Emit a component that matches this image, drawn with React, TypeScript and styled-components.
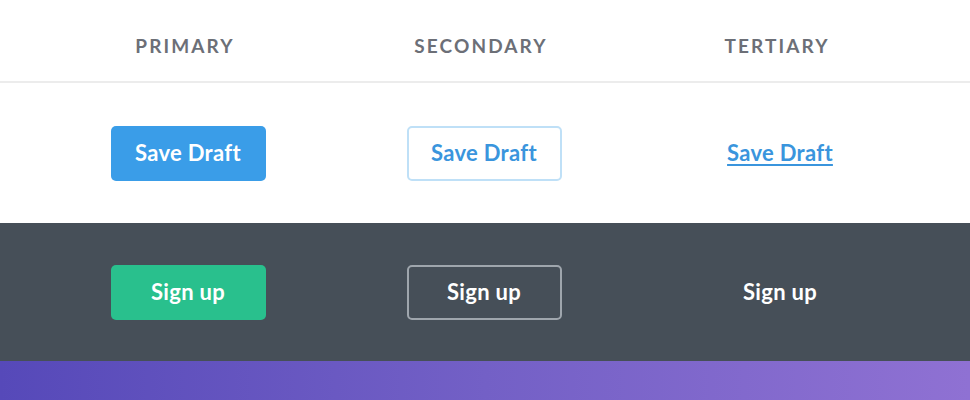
import React from 'react';
import styled, { createGlobalStyle, css } from 'styled-components';

const GlobalStyle = createGlobalStyle`
  html, body {
    margin: 0;
    padding: 0;
    background: #ffffff;
  }
  body {
    font-family: Lato, "Open Sans", Arial, sans-serif;
    -webkit-font-smoothing: antialiased;
  }
`;

const Page = styled.div`
  width: 970px;
  height: 400px;
  overflow: hidden;
  display: flex;
  flex-direction: column;
`;

const Row = styled.div<{ $height: number; $dark?: boolean; $border?: boolean }>`
  display: grid;
  grid-template-columns: repeat(3, 296px);
  padding: 0 42px 0 40px;
  align-items: center;
  justify-items: center;
  height: ${({ $height }) => $height}px;
  flex-shrink: 0;
  background: ${({ $dark }) => ($dark ? '#464f58' : '#ffffff')};
  ${({ $border }) => $border && css`border-bottom: 2px solid #ececec;`}
`;

const Label = styled.div`
  font-size: 19px;
  font-weight: 700;
  letter-spacing: 2.1px;
  color: #6c6f77;
  margin-right: 6px;
  padding-top: 9px;
`;

type Variant = 'primary' | 'secondary' | 'tertiary';
type Tone = 'light' | 'dark';

const Button = styled.button<{ $variant: Variant; $tone: Tone }>`
  font-family: inherit;
  font-size: 22px;
  font-weight: 700;
  letter-spacing: 0.3px;
  width: 155px;
  height: 55px;
  border-radius: 5px;
  border: 2px solid transparent;
  cursor: pointer;
  padding: 0 0 1px;
  ${({ $variant, $tone }) => {
    if ($variant === 'primary')
      return css`
        background: ${$tone === 'light' ? '#3a9de8' : '#29c08d'};
        color: #ffffff;
      `;
    if ($variant === 'secondary')
      return css`
        background: transparent;
        border-color: ${$tone === 'light' ? '#bfe0f7' : '#9fa6ad'};
        color: ${$tone === 'light' ? '#3a95dd' : '#ffffff'};
      `;
    return css`
      background: transparent;
      width: auto;
      color: ${$tone === 'light' ? '#3a95dd' : '#ffffff'};
      text-decoration: ${$tone === 'light' ? 'underline' : 'none'};
      text-decoration-thickness: 2px;
      text-underline-offset: 3px;
    `;
  }}
`;

const Gradient = styled.div`
  flex: 1;
  background: linear-gradient(90deg, #5649b9 0%, #7360c6 50%, #8f71d3 100%);
`;

const variants: Variant[] = ['primary', 'secondary', 'tertiary'];

const App: React.FC = () => (
  <>
    <GlobalStyle />
    <Page>
      <Row $height={81} $border>
        <Label>PRIMARY</Label>
        <Label>SECONDARY</Label>
        <Label>TERTIARY</Label>
      </Row>
      <Row $height={140}>
        {variants.map((v) => (
          <Button key={v} $variant={v} $tone="light">Save Draft</Button>
        ))}
      </Row>
      <Row $height={138} $dark>
        {variants.map((v) => (
          <Button key={v} $variant={v} $tone="dark">Sign up</Button>
        ))}
      </Row>
      <Gradient />
    </Page>
  </>
);

export default App;
